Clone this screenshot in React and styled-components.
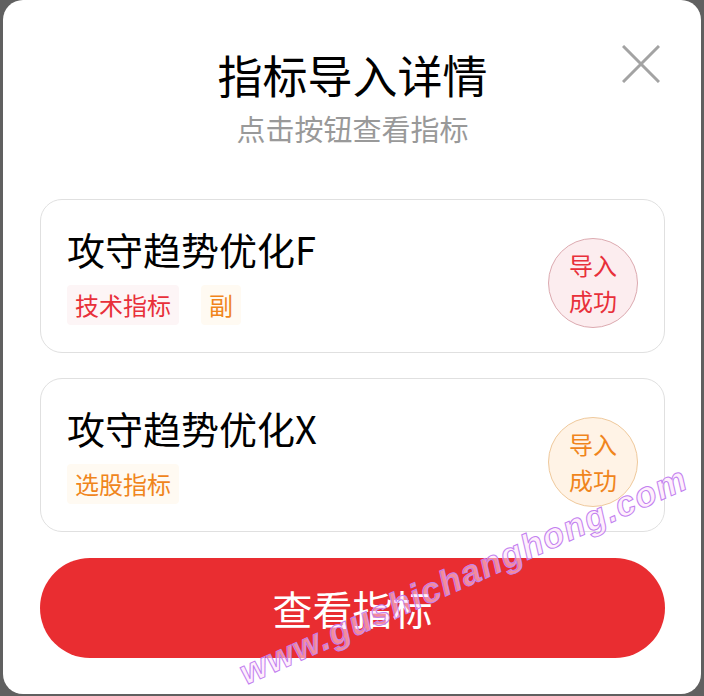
import React from 'react';
import styled, { createGlobalStyle } from 'styled-components';

const GlobalStyle = createGlobalStyle`
  html, body {
    margin: 0;
    padding: 0;
    background: #606060;
    font-family: "Noto Sans CJK SC", "Noto Sans", sans-serif;
  }
`;

const items = [
  {
    name: '攻守趋势优化F',
    tags: [
      { label: '技术指标', tone: 'red' },
      { label: '副', tone: 'orange' }
    ],
    tone: 'red'
  },
  {
    name: '攻守趋势优化X',
    tags: [{ label: '选股指标', tone: 'orange' }],
    tone: 'orange'
  }
];

const tones = {
  red: { text: '#e8303a', bg: '#fdf5f6', border: '#dcaab0', circle: '#fcedef' },
  orange: { text: '#f0851c', bg: '#fffaf2', border: '#efc99c', circle: '#fff3e6' }
};

const App = () => (
  <>
    <GlobalStyle />
    <Page>
      <Modal>
        <Header>
          <Title>指标导入详情</Title>
          <Subtitle>点击按钮查看指标</Subtitle>
          <CloseButton aria-label="close">
            <svg width="38" height="38" viewBox="0 0 38 38">
              <path d="M1 1 L37 37 M37 1 L1 37" stroke="#a3a3a3" strokeWidth="3" fill="none" />
            </svg>
          </CloseButton>
        </Header>
        <List>
          {items.map(item => (
            <Card key={item.name}>
              <Info>
                <Name>{item.name}</Name>
                <Tags>
                  {item.tags.map(tag => (
                    <Tag key={tag.label} tone={tag.tone}>
                      {tag.label}
                    </Tag>
                  ))}
                </Tags>
              </Info>
              <Badge tone={item.tone}>
                导入
                <br />
                成功
              </Badge>
            </Card>
          ))}
        </List>
        <ViewButton>查看指标</ViewButton>
        <Watermark>www.gushichanghong.com</Watermark>
      </Modal>
    </Page>
  </>
);

export default App;

const Page = styled.div`
  width: 704px;
  height: 696px;
  overflow: hidden;
`;

const Modal = styled.div`
  position: relative;
  margin: 0 3px;
  height: 694px;
  box-sizing: border-box;
  background: #fff;
  border-radius: 20px;
  padding: 50px 36px 0 37px;
  overflow: hidden;
`;

const Header = styled.div`
  position: relative;
  display: flex;
  flex-direction: column;
  align-items: center;
`;

const Title = styled.h1`
  margin: 0;
  font-size: 45px;
  line-height: 50px;
  font-weight: 400;
  color: #000;
`;

const Subtitle = styled.div`
  margin-top: 10px;
  font-size: 29px;
  line-height: 36px;
  color: #999;
`;

const CloseButton = styled.button`
  position: absolute;
  top: -5px;
  right: 5px;
  width: 38px;
  height: 38px;
  padding: 0;
  border: none;
  background: none;
  display: flex;
`;

const List = styled.div`
  margin-top: 53px;
  display: flex;
  flex-direction: column;
  gap: 25px;
`;

const Card = styled.div`
  height: 154px;
  box-sizing: border-box;
  border: 1px solid #e0e0e0;
  border-radius: 22px;
  padding: 26px 26px 0 26px;
  display: flex;
  justify-content: space-between;
  align-items: flex-start;
`;

const Info = styled.div`
  display: flex;
  flex-direction: column;
`;

const Name = styled.div`
  font-size: 38px;
  line-height: 46px;
  color: #000;
`;

const Tags = styled.div`
  margin-top: 13px;
  display: flex;
  gap: 22px;
`;

const Tag = styled.span`
  height: 40px;
  line-height: 40px;
  padding: 0 8px;
  font-size: 24px;
  color: ${p => tones[p.tone].text};
  background: ${p => tones[p.tone].bg};
  border-radius: 4px;
`;

const Badge = styled.div`
  margin-top: 12px;
  width: 90px;
  height: 90px;
  box-sizing: border-box;
  border-radius: 50%;
  border: 1px solid ${p => tones[p.tone].border};
  background: ${p => tones[p.tone].circle};
  color: ${p => tones[p.tone].text};
  font-size: 24px;
  line-height: 36px;
  display: flex;
  align-items: center;
  justify-content: center;
  text-align: center;
`;

const ViewButton = styled.button`
  margin-top: 26px;
  width: 625px;
  height: 100px;
  border: none;
  border-radius: 50px;
  background: #e92d31;
  color: #fff;
  font-family: "Noto Sans CJK SC", sans-serif;
  font-size: 40px;
  display: flex;
  align-items: center;
  justify-content: center;
`;

const Watermark = styled.div`
  position: absolute;
  left: 230px;
  top: 656px;
  transform: rotate(-24deg);
  transform-origin: left top;
  font-family: "Liberation Sans", sans-serif;
  font-style: italic;
  font-weight: 700;
  font-size: 35px;
  line-height: 40px;
  letter-spacing: 1.5px;
  color: rgba(255, 225, 250, 0.55);
  -webkit-text-stroke: 1px #c280f0;
  white-space: nowrap;
  pointer-events: none;
`;
